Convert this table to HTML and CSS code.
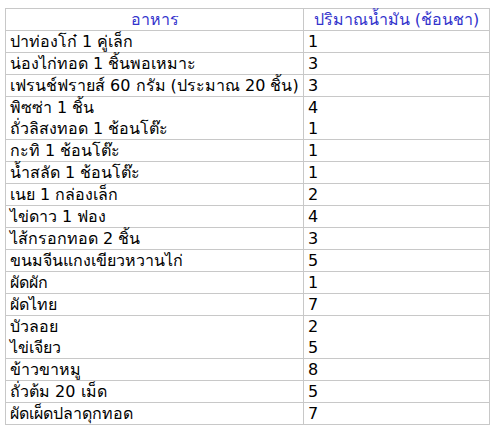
FILE: index.html
```html
<!DOCTYPE html>
<html lang="th">
<head>
<meta charset="utf-8">
<link rel="stylesheet" href="styles.css">
</head>
<body>
<table class="oil">
  <colgroup><col class="c-food"><col class="c-oil"></colgroup>
  <thead>
    <tr><th>อาหาร</th><th>ปริมาณน้ำมัน (ช้อนชา)</th></tr>
  </thead>
  <tbody>
    <tr><td>ปาท่องโก๋ 1 คู่เล็ก</td><td>1</td></tr>
    <tr><td>น่องไก่ทอด 1 ชิ้นพอเหมาะ</td><td>3</td></tr>
    <tr><td>เฟรนช์ฟรายส์ 60 กรัม (ประมาณ 20 ชิ้น)</td><td>3</td></tr>
    <tr><td>พิซซ่า 1 ชิ้น<br>ถั่วลิสงทอด 1 ช้อนโต๊ะ</td><td>4<br>1</td></tr>
    <tr><td>กะทิ 1 ช้อนโต๊ะ</td><td>1</td></tr>
    <tr><td>น้ำสลัด 1 ช้อนโต๊ะ</td><td>1</td></tr>
    <tr><td>เนย 1 กล่องเล็ก</td><td>2</td></tr>
    <tr><td>ไข่ดาว 1 ฟอง</td><td>4</td></tr>
    <tr><td>ไส้กรอกทอด 2 ชิ้น</td><td>3</td></tr>
    <tr><td>ขนมจีนแกงเขียวหวานไก่</td><td>5</td></tr>
    <tr><td>ผัดผัก</td><td>1</td></tr>
    <tr><td>ผัดไทย</td><td>7</td></tr>
    <tr><td>บัวลอย<br>ไข่เจียว</td><td>2<br>5</td></tr>
    <tr><td>ข้าวขาหมู</td><td>8</td></tr>
    <tr><td>ถั่วต้ม 20 เม็ด</td><td>5</td></tr>
    <tr><td>ผัดเผ็ดปลาดุกทอด</td><td>7</td></tr>
  </tbody>
</table>
</body>
</html>
```
FILE: styles.css
```css
html, body {
  margin: 0;
  padding: 0;
  background: #ffffff;
}
body {
  padding: 8px 0 0 5px;
  font-family: Tahoma, "DejaVu Sans", "Noto Sans", sans-serif;
  font-size: 16px;
  color: #000000;
}
.oil {
  border-collapse: collapse;
  table-layout: fixed;
  width: 484px;
}
.c-food { width: 298px; }
.c-oil { width: 186px; }
.oil th,
.oil td {
  border: 1px solid #c8c8c8;
  padding: 0 4px;
  line-height: 21px;
  height: 21px;
  vertical-align: top;
  text-align: left;
  white-space: nowrap;
}
.oil th {
  font-weight: normal;
  text-align: center;
  color: #3333cc;
}
```
